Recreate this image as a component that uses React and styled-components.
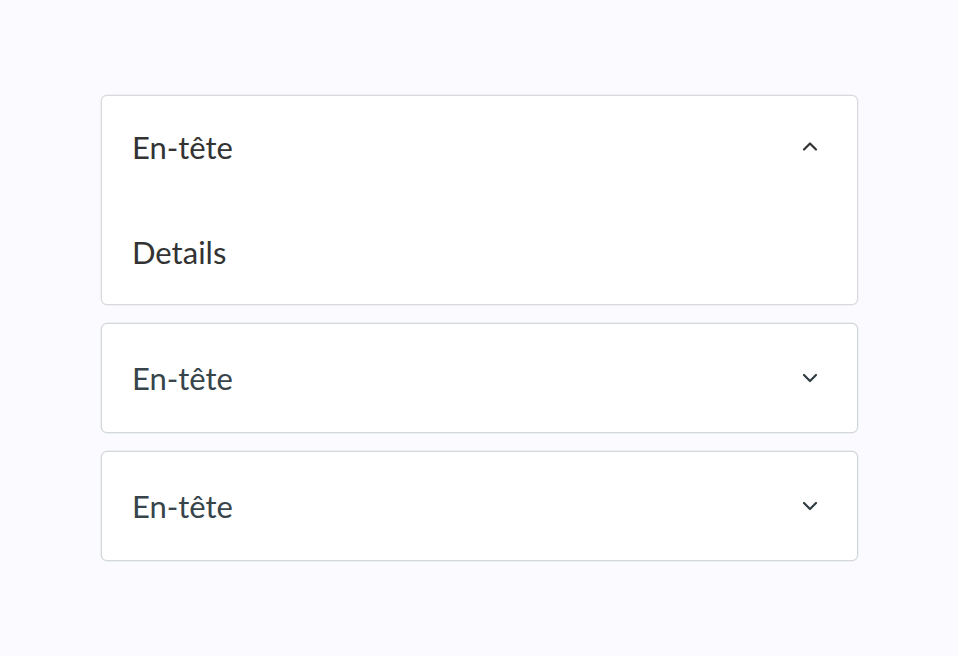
import styled, { createGlobalStyle } from "styled-components";

const GlobalStyle = createGlobalStyle`
  body {
    margin: 0;
    background: #fbfaff;
    font-family: "Lato", "Open Sans", sans-serif;
  }
`;

const Page = styled.div`
  min-height: 656px;
  padding: 95px 100px 0 101px;
  box-sizing: border-box;
  display: flex;
  flex-direction: column;
  gap: 18px;
`;

const Card = styled.div`
  width: 757px;
  box-sizing: border-box;
  background: #fff;
  border: 1px solid ${(p) => (p.$open ? "#d9dadd" : "#d3d8da")};
  box-shadow: 0 0 0 0.5px ${(p) => (p.$open ? "#e6e6ea" : "#e0e4e6")};
  border-radius: 6px;
`;

const Header = styled.div`
  height: 108px;
  padding: 0 38px ${(p) => (p.$open ? "7px" : "1px")} 30px;
  box-sizing: border-box;
  display: flex;
  align-items: center;
  justify-content: space-between;
`;

const Title = styled.span`
  font-size: 31px;
  color: ${(p) => (p.$open ? "#333333" : "#37454a")};
`;

const Body = styled.div`
  height: 100px;
  padding: 0 30px 5px;
  box-sizing: border-box;
  display: flex;
  align-items: center;
  font-size: 31px;
  color: #333333;
`;

const Chevron = ({ up, color }) => (
  <svg width="18" height="18" viewBox="0 0 18 18" fill="none">
    <path
      d={up ? "M3 11.5 L9 5.5 L15 11.5" : "M3 6 L9 12 L15 6"}
      stroke={color}
      strokeWidth="2.2"
      strokeLinecap="round"
      strokeLinejoin="round"
    />
  </svg>
);

const items = [
  { open: true, details: "Details" },
  { open: false },
  { open: false },
];

export default function App() {
  return (
    <>
      <GlobalStyle />
      <Page>
        {items.map((item, i) => (
          <Card key={i} $open={item.open}>
            <Header $open={item.open}>
              <Title $open={item.open}>En-tête</Title>
              <Chevron up={item.open} color={item.open ? "#333" : "#2f3d40"} />
            </Header>
            {item.open && <Body>{item.details}</Body>}
          </Card>
        ))}
      </Page>
    </>
  );
}
